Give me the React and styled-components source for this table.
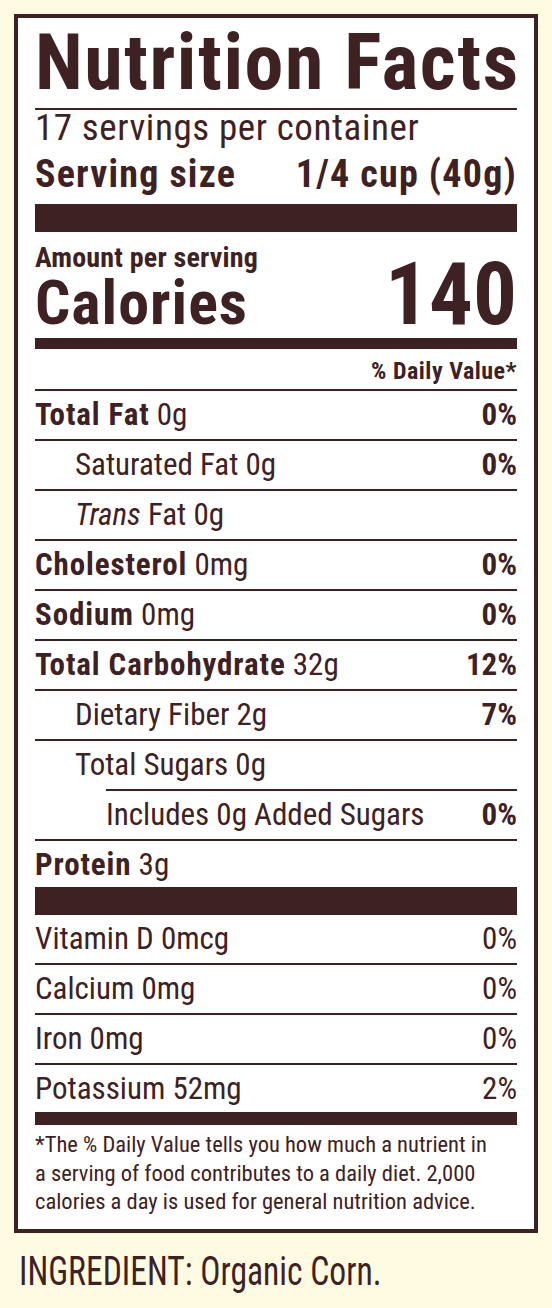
import React from "react";
import styled, { createGlobalStyle } from "styled-components";

const BROWN = "#3d2123";
const CREAM = "#fffbe3";

const GlobalStyle = createGlobalStyle`
  html, body {
    margin: 0;
    padding: 0;
    background: ${CREAM};
  }
  body {
    font-family: "Roboto Condensed", "Liberation Sans", sans-serif;
    color: ${BROWN};
  }
`;

const Page = styled.div`
  width: 552px;
  padding: 14px 14px 0;
  box-sizing: border-box;
`;

const Label = styled.div`
  border: 4px solid ${BROWN};
  background: #ffffff;
  padding: 0 17px 13px;
`;

const Title = styled.h1`
  margin: 0;
  font-size: 78px;
  line-height: 90px;
  font-weight: 700;
  letter-spacing: 1.5px;
  white-space: nowrap;
`;

const Rule = styled.div`
  height: ${(p) => p.$h || 2}px;
  background: ${BROWN};
  margin-top: ${(p) => p.$mt || 0}px;
  margin-left: ${(p) => p.$indent || 0}px;
`;

const Servings = styled.div`
  font-size: 37px;
  line-height: 36px;
  letter-spacing: 0.6px;
`;

const ServingSize = styled.div`
  display: flex;
  justify-content: space-between;
  font-size: 38px;
  line-height: 44px;
  font-weight: 700;
  letter-spacing: 1.2px;
  padding-top: 6px;
`;

const CalorieBlock = styled.div`
  display: flex;
  justify-content: space-between;
  align-items: flex-end;
`;

const CalorieLeft = styled.div`
  display: flex;
  flex-direction: column;
`;

const AmountPer = styled.div`
  font-size: 28px;
  line-height: 32px;
  font-weight: 700;
  letter-spacing: 0.2px;
  padding-top: 10px;
`;

const CaloriesWord = styled.div`
  font-size: 62px;
  line-height: 58px;
  font-weight: 700;
  letter-spacing: 1px;
`;

const CaloriesValue = styled.div`
  font-size: 87px;
  line-height: 76px;
  font-weight: 700;
`;

const DvHeader = styled.div`
  text-align: right;
  font-size: 24px;
  line-height: 36px;
  font-weight: 700;
  letter-spacing: 0.5px;
  padding-top: 4px;
`;

const Row = styled.div`
  display: flex;
  justify-content: space-between;
  align-items: center;
  height: 48px;
  font-size: 31px;
  line-height: 48px;
  white-space: nowrap;
  ${(p) => p.$line && `border-top: 2px solid ${BROWN};`}
`;

const Name = styled.span`
  padding-left: ${(p) => p.$indent || 0}px;
  b {
    font-weight: 700;
    letter-spacing: 0.9px;
  }
  i {
    font-style: italic;
  }
`;

const Pct = styled.span`
  font-weight: ${(p) => (p.$plain ? 400 : 700)};
`;

const Footnote = styled.p`
  margin: 0;
  padding-top: 5px;
  font-size: 22.5px;
  line-height: 28.5px;
  white-space: nowrap;
`;

const Ingredient = styled.div`
  padding: 14px 0 0 6px;
  font-size: 40px;
  line-height: 50px;
  white-space: nowrap;
  transform: scaleX(0.84);
  transform-origin: left center;
`;

const nutrients = [
  { name: <><b>Total Fat</b> 0g</>, pct: "0%", indent: 0 },
  { name: <>Saturated Fat 0g</>, pct: "0%", indent: 40 },
  { name: <><i>Trans</i> Fat 0g</>, pct: "", indent: 40 },
  { name: <><b>Cholesterol</b> 0mg</>, pct: "0%", indent: 0 },
  { name: <><b>Sodium</b> 0mg</>, pct: "0%", indent: 0 },
  { name: <><b>Total Carbohydrate</b> 32g</>, pct: "12%", indent: 0 },
  { name: <>Dietary Fiber 2g</>, pct: "7%", indent: 40 },
  { name: <>Total Sugars 0g</>, pct: "", indent: 40 },
  { name: <>Includes 0g Added Sugars</>, pct: "0%", indent: 71, lineIndent: 71 },
  { name: <><b>Protein</b> 3g</>, pct: "", indent: 0 },
];

const vitamins = [
  { name: "Vitamin D 0mcg", pct: "0%" },
  { name: "Calcium 0mg", pct: "0%" },
  { name: "Iron 0mg", pct: "0%" },
  { name: "Potassium 52mg", pct: "2%" },
];

const App = () => {
  return (
    <Page>
      <GlobalStyle />
      <Label>
        <Title>Nutrition Facts</Title>
        <Rule $h={2} />
        <Servings>17 servings per container</Servings>
        <ServingSize>
          <span>Serving size</span>
          <span>1/4 cup (40g)</span>
        </ServingSize>
        <Rule $h={28} $mt={8} />
        <CalorieBlock>
          <CalorieLeft>
            <AmountPer>Amount per serving</AmountPer>
            <CaloriesWord>Calories</CaloriesWord>
          </CalorieLeft>
          <CaloriesValue>140</CaloriesValue>
        </CalorieBlock>
        <Rule $h={11} $mt={6} />
        <DvHeader>% Daily Value*</DvHeader>
        {nutrients.map((n, i) => (
          <React.Fragment key={i}>
            <Rule $h={2} $indent={n.lineIndent} />
            <Row>
              <Name $indent={n.indent}>{n.name}</Name>
              <Pct>{n.pct}</Pct>
            </Row>
          </React.Fragment>
        ))}
        <Rule $h={28} $mt={-2} />
        {vitamins.map((v, i) => (
          <Row key={i} $line={i > 0}>
            <Name>{v.name}</Name>
            <Pct $plain>{v.pct}</Pct>
          </Row>
        ))}
        <Rule $h={13} $mt={-1} />
        <Footnote>
          *The % Daily Value tells you how much a nutrient in
          <br />
          a serving of food contributes to a daily diet. 2,000
          <br />
          calories a day is used for general nutrition advice.
        </Footnote>
      </Label>
      <Ingredient>INGREDIENT: Organic Corn.</Ingredient>
    </Page>
  );
};

export default App;
